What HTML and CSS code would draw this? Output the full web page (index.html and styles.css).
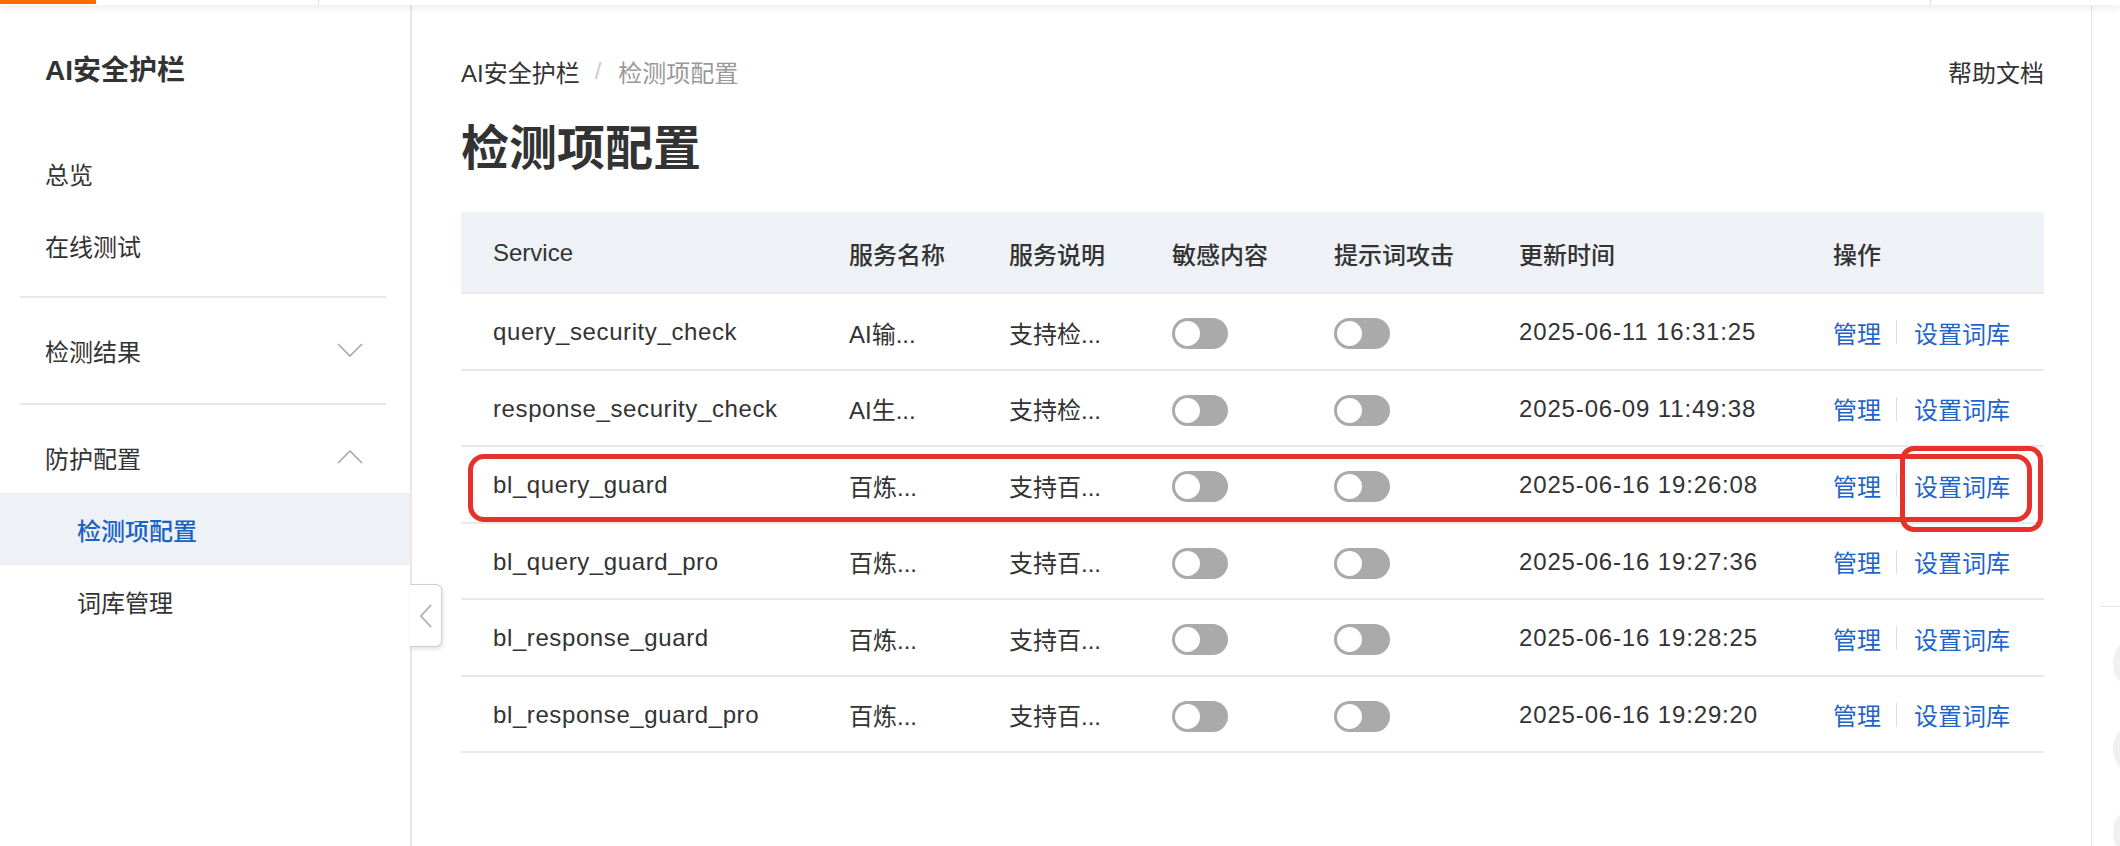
FILE: index.html
```html
<!DOCTYPE html>
<html lang="zh-CN">
<head>
<meta charset="utf-8">
<title>检测项配置</title>
<link rel="stylesheet" href="styles.css">
</head>
<body>
<div class="topbar">
  <div class="topbar-brand"></div>
  <div class="topbar-sep topbar-sep-a"></div>
  <div class="topbar-fill"></div>
  <div class="topbar-sep"></div>
  <div class="topbar-end"></div>
</div>
<div class="layout">
  <aside class="sidebar">
    <div class="side-title">AI安全护栏</div>
    <nav class="menu">
      <div class="menu-item">总览</div>
      <div class="menu-item">在线测试</div>
      <div class="menu-divider"></div>
      <div class="menu-item menu-group">
        <span>检测结果</span>
        <svg class="chev" width="26" height="14" viewBox="0 0 26 14"><polyline points="1,1 13,13 25,1" fill="none" stroke="#a8a8a8" stroke-width="1.6"/></svg>
      </div>
      <div class="menu-divider menu-divider-b"></div>
      <div class="menu-item menu-group">
        <span>防护配置</span>
        <svg class="chev" width="26" height="14" viewBox="0 0 26 14"><polyline points="1,13 13,1 25,13" fill="none" stroke="#a8a8a8" stroke-width="1.6"/></svg>
      </div>
      <div class="menu-item menu-sub active">检测项配置</div>
      <div class="menu-item menu-sub">词库管理</div>
    </nav>
    <div class="collapse-tab">
      <svg width="12" height="24" viewBox="0 0 12 24"><polyline points="11,1 1,12 11,23" fill="none" stroke="#b0b0b0" stroke-width="1.8"/></svg>
    </div>
  </aside>
  <main class="main">
    <div class="crumb-row">
      <div class="crumbs">
        <span class="crumb">AI安全护栏</span>
        <span class="crumb-sep">/</span>
        <span class="crumb crumb-current">检测项配置</span>
      </div>
      <div class="help">帮助文档</div>
    </div>
    <h1 class="page-title">检测项配置</h1>
    <div class="table">
      <div class="row head">
        <div class="cell">Service</div>
        <div class="cell">服务名称</div>
        <div class="cell">服务说明</div>
        <div class="cell">敏感内容</div>
        <div class="cell">提示词攻击</div>
        <div class="cell">更新时间</div>
        <div class="cell">操作</div>
      </div>
      <div class="row">
        <div class="cell svc">query_security_check</div>
        <div class="cell">AI输...</div>
        <div class="cell">支持检...</div>
        <div class="cell sw"><span class="switch"><span class="knob"></span></span></div>
        <div class="cell sw"><span class="switch"><span class="knob"></span></span></div>
        <div class="cell date">2025-06-11 16:31:25</div>
        <div class="cell ops"><a class="link">管理</a><span class="op-sep"></span><a class="link">设置词库</a></div>
      </div>
      <div class="row">
        <div class="cell svc">response_security_check</div>
        <div class="cell">AI生...</div>
        <div class="cell">支持检...</div>
        <div class="cell sw"><span class="switch"><span class="knob"></span></span></div>
        <div class="cell sw"><span class="switch"><span class="knob"></span></span></div>
        <div class="cell date">2025-06-09 11:49:38</div>
        <div class="cell ops"><a class="link">管理</a><span class="op-sep"></span><a class="link">设置词库</a></div>
      </div>
      <div class="row">
        <div class="cell svc">bl_query_guard</div>
        <div class="cell">百炼...</div>
        <div class="cell">支持百...</div>
        <div class="cell sw"><span class="switch"><span class="knob"></span></span></div>
        <div class="cell sw"><span class="switch"><span class="knob"></span></span></div>
        <div class="cell date">2025-06-16 19:26:08</div>
        <div class="cell ops"><a class="link">管理</a><span class="op-sep"></span><a class="link">设置词库</a></div>
      </div>
      <div class="row">
        <div class="cell svc">bl_query_guard_pro</div>
        <div class="cell">百炼...</div>
        <div class="cell">支持百...</div>
        <div class="cell sw"><span class="switch"><span class="knob"></span></span></div>
        <div class="cell sw"><span class="switch"><span class="knob"></span></span></div>
        <div class="cell date">2025-06-16 19:27:36</div>
        <div class="cell ops"><a class="link">管理</a><span class="op-sep"></span><a class="link">设置词库</a></div>
      </div>
      <div class="row">
        <div class="cell svc">bl_response_guard</div>
        <div class="cell">百炼...</div>
        <div class="cell">支持百...</div>
        <div class="cell sw"><span class="switch"><span class="knob"></span></span></div>
        <div class="cell sw"><span class="switch"><span class="knob"></span></span></div>
        <div class="cell date">2025-06-16 19:28:25</div>
        <div class="cell ops"><a class="link">管理</a><span class="op-sep"></span><a class="link">设置词库</a></div>
      </div>
      <div class="row">
        <div class="cell svc">bl_response_guard_pro</div>
        <div class="cell">百炼...</div>
        <div class="cell">支持百...</div>
        <div class="cell sw"><span class="switch"><span class="knob"></span></span></div>
        <div class="cell sw"><span class="switch"><span class="knob"></span></span></div>
        <div class="cell date">2025-06-16 19:29:20</div>
        <div class="cell ops"><a class="link">管理</a><span class="op-sep"></span><a class="link">设置词库</a></div>
      </div>
      <div class="mark mark-row"></div>
      <div class="mark mark-link"></div>
    </div>
  </main>
  <aside class="rail">
    <div class="rail-line"></div>
    <div class="fab fab-1"></div>
    <div class="fab fab-2"></div>
    <div class="fab fab-3"></div>
  </aside>
</div>
</body>
</html>
```
FILE: styles.css
```css
* { box-sizing: border-box; }
html, body {
  margin: 0;
  padding: 0;
  width: 2120px;
  height: 846px;
  overflow: hidden;
  background: #ffffff;
  font-family: "Liberation Sans", "Noto Sans CJK SC", sans-serif;
  color: #333333;
}

.topbar {
  height: 5px;
  display: flex;
  background: #ffffff;
  box-shadow: 0 2px 8px rgba(0, 0, 0, 0.12);
  position: relative;
  z-index: 2;
}
.topbar-brand { width: 96px; height: 4px; background: #ff6a00; }
.topbar-sep { width: 1px; background: #dddddd; }
.topbar-sep-a { margin-left: 222px; }
.topbar-fill { flex: 1; }
.topbar-end { width: 189px; }

.layout {
  display: flex;
  height: 841px;
}

.sidebar {
  width: 412px;
  flex: none;
  border-right: 2px solid #e8e8e8;
  position: relative;
  background: #ffffff;
}
.side-title {
  padding: 46px 0 0 45px;
  font-size: 28px;
  line-height: 40px;
  font-weight: 600;
  color: #333333;
}
.menu { margin-top: 46px; }
.menu-item {
  height: 72px;
  display: flex;
  align-items: center;
  padding-left: 45px;
  font-size: 24px;
  color: #333333;
}
.menu-group {
  justify-content: space-between;
  padding-right: 47px;
}
.menu-divider {
  height: 2px;
  background: #e8e8e8;
  margin: 15px 24px 16px 20px;
}
.menu-divider-b { margin-top: 17px; }
.menu-sub { padding-left: 77px; }
.menu-sub.active {
  background: #eef1f5;
  color: #1a62c4;
  font-weight: 500;
}
.collapse-tab {
  position: absolute;
  left: 410px;
  top: 579px;
  width: 32px;
  height: 63px;
  background: #ffffff;
  border: 1px solid #cfcfcf;
  border-left: none;
  border-radius: 0 6px 6px 0;
  box-shadow: 1px 2px 4px rgba(0, 0, 0, 0.12);
  display: flex;
  align-items: center;
  justify-content: center;
}

.main {
  flex: 1;
  padding: 49px 47px 0 49px;
  min-width: 0;
}
.crumb-row {
  display: flex;
  justify-content: space-between;
  align-items: center;
  height: 34px;
  font-size: 24px;
}
.crumbs { display: flex; align-items: center; }
.crumb { color: #333333; }
.crumb-sep { color: #cccccc; margin: 0 17px 0 15px; }
.crumb-current { color: #999999; }
.help { color: #333333; }

.page-title {
  margin: 29px 0 31px 0;
  font-size: 48px;
  line-height: 64px;
  font-weight: 700;
  color: #333333;
}

.table { position: relative; }
.row {
  display: grid;
  grid-template-columns: 356px 160px 163px 162px 185px 314px 1fr;
  height: 76.5px;
  border-bottom: 2px solid #e9e9e9;
  font-size: 24px;
  color: #333333;
}
.row.head {
  height: 82px;
  background: #eef1f5;
  border-radius: 4px 4px 0 0;
  font-weight: 500;
  color: #333333;
}
.cell {
  display: flex;
  align-items: center;
  padding-left: 32px;
  padding-top: 2px;
  white-space: nowrap;
}
.row.head .cell { padding-top: 2px; }
.cell.svc { letter-spacing: 0.6px; }
.cell.date { letter-spacing: 0.85px; }
.cell.sw { padding-top: 5px; }
.switch {
  width: 56px;
  height: 31px;
  border-radius: 16px;
  background: #aaaaaa;
  display: flex;
  align-items: center;
  padding-left: 3px;
}
.knob {
  width: 25px;
  height: 25px;
  border-radius: 50%;
  background: #ffffff;
}
.link {
  color: #1f64c8;
  text-decoration: none;
}
.op-sep {
  width: 1px;
  height: 24px;
  background: #dddddd;
  margin: 0 17px 0 15px;
}

.mark {
  position: absolute;
  border: 5px solid #e6322c;
  border-radius: 16px;
  pointer-events: none;
}
.mark-row {
  left: 7px;
  top: 242px;
  width: 1564px;
  height: 68px;
}
.mark-link {
  left: 1439px;
  top: 234px;
  width: 143px;
  height: 86px;
  border-radius: 14px;
}

.rail {
  width: 29px;
  flex: none;
  border-left: 1px solid #e6e6e6;
  position: relative;
}
.rail-line {
  position: absolute;
  left: 8px;
  right: 0;
  top: 601px;
  height: 1px;
  background: #e6e6e6;
}
.fab {
  position: absolute;
  left: 21px;
  width: 56px;
  height: 56px;
  border-radius: 50%;
  background: #f0f0f0;
}
.fab-1 { top: 630px; }
.fab-2 { top: 716px; }
.fab-3 { top: 800px; }
```
